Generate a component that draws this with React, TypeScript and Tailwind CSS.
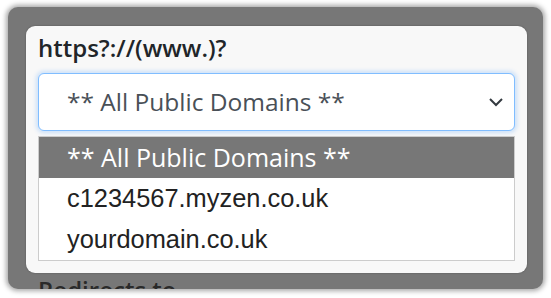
import React from "react";

export default function App() {
  const items = ["** All Public Domains **", "c1234567.myzen.co.uk", "yourdomain.co.uk"];
  return (
    <div className="w-[551px] h-[298px] bg-white overflow-hidden pt-[7px] pl-[8px]">
      <div className="w-[535px] h-[282px] rounded-[10px] bg-[#777777] shadow-[0_0_5px_2px_rgba(0,0,0,0.35)] overflow-hidden pt-[19px] pl-[18px]">
        <div className="w-[501px] h-[247px] rounded-[9px] bg-[#f8f8f8] pl-[12px] pt-[4px] shadow-[0_0_2px_rgba(0,0,0,0.3)]">
          <div
            className="text-[24px] leading-[36px] font-semibold text-[#212529]"
            style={{ fontFamily: '"Open Sans", sans-serif' }}
          >
            https?://(www.)?
          </div>
          <div className="mt-[7px] w-[477px] h-[58px] rounded-[6px] border border-[#80bdff] bg-white shadow-[0_0_4px_2px_rgba(0,123,255,0.18)] flex items-center pl-[28px] pr-[10px]">
            <span
              className="flex-1 text-[24.5px] text-[#495057]"
              style={{ fontFamily: '"Open Sans", sans-serif' }}
            >
              ** All Public Domains **
            </span>
            <svg width="16" height="10" viewBox="0 0 16 10">
              <path d="M2 2 L8 8 L14 2" fill="none" stroke="#343a40" strokeWidth="2" />
            </svg>
          </div>
          <div className="mt-[5px] w-[477px] border border-[#cccccc] bg-white">
            {items.map((t, i) => (
              <div
                key={t}
                className={
                  "h-[41px] flex items-center pl-[28px] " +
                  (i === 0 ? "bg-[#777777] text-white text-[25px]" : "text-[#222222] text-[25.4px]")
                }
                style={{
                  fontFamily:
                    i === 0 ? '"Open Sans", sans-serif' : '"Liberation Sans", Arial, sans-serif',
                }}
              >
                {t}
              </div>
            ))}
          </div>
        </div>
        <div
          className="mt-[-1px] pl-[12px] text-[24px] leading-[36px] font-semibold text-[#2a2a2a]"
          style={{ fontFamily: '"Open Sans", sans-serif' }}
        >
          Redirects to
        </div>
      </div>
    </div>
  );
}
